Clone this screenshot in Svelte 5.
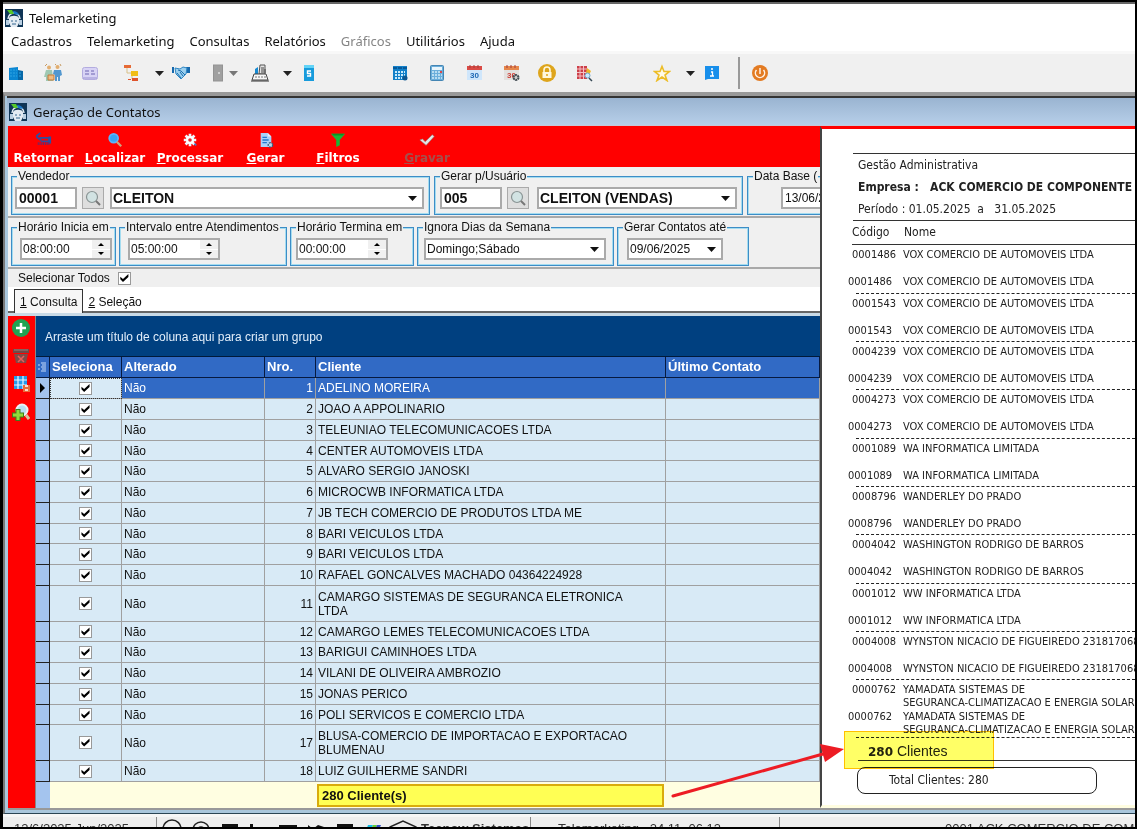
<script lang="ts">
  type Tool = { name: string; icon?: string; gap: number; kind?: "drop" | "sep"; off?: boolean };

  const menus = ["Cadastros", "Telemarketing", "Consultas", "Relatórios", "Gráficos", "Utilitários", "Ajuda"];

  // gap is the empty space to the left of each tool
  const tools: Tool[] = [
    { name: "Empresas", icon: "building", gap: 4 },
    { name: "Clientes", icon: "people", gap: 19 },
    { name: "Cartões", icon: "card", gap: 19 },
    { name: "Estrutura", icon: "tree", gap: 24 },
    { name: "Opções da estrutura", kind: "drop", gap: 14 },
    { name: "Negociações", icon: "hands", gap: 8 },
    { name: "Saída", icon: "door", gap: 19 },
    { name: "Opções de saída", kind: "drop", gap: 2, off: true },
    { name: "Caixa", icon: "cash", gap: 13 },
    { name: "Opções do caixa", kind: "drop", gap: 14 },
    { name: "Serviços", icon: "ess", gap: 8 },
    { name: "Agenda", icon: "agenda", gap: 73 },
    { name: "Calculadora", icon: "calc", gap: 19 },
    { name: "Calendário", icon: "day", gap: 19 },
    { name: "Configurar calendário", icon: "daygear", gap: 19 },
    { name: "Bloquear", icon: "lock", gap: 18 },
    { name: "Pesquisar tabela", icon: "gridfind", gap: 19 },
    { name: "Favoritos", icon: "star", gap: 60 },
    { name: "Opções de favoritos", kind: "drop", gap: 15 },
    { name: "Informações", icon: "info", gap: 8 },
    { name: "", kind: "sep", gap: 17 },
    { name: "Desligar", icon: "power", gap: 11 },
  ];

  const actions = [
    { key: "", label: "Retornar", icon: "back", width: 71 },
    { key: "L", label: "ocalizar", icon: "find", width: 72 },
    { key: "P", label: "rocessar", icon: "gear", width: 78 },
    { key: "G", label: "erar", icon: "doc", width: 73 },
    { key: "F", label: "iltros", icon: "funnel", width: 72 },
    { key: "G", label: "ravar", icon: "check", width: 106, off: true },
  ];

  const side = [
    { name: "Adicionar", icon: "add" },
    { name: "Excluir", icon: "trash" },
    { name: "Salvar grade", icon: "gridsave" },
    { name: "Pesquisar", icon: "addfind" },
  ];

  const clients = [
    "ADELINO MOREIRA",
    "JOAO A APPOLINARIO",
    "TELEUNIAO TELECOMUNICACOES LTDA",
    "CENTER AUTOMOVEIS LTDA",
    "ALVARO SERGIO JANOSKI",
    "MICROCWB INFORMATICA LTDA",
    "JB TECH COMERCIO DE PRODUTOS LTDA ME",
    "BARI VEICULOS LTDA",
    "BARI VEICULOS LTDA",
    "RAFAEL GONCALVES MACHADO 04364224928",
    "CAMARGO SISTEMAS DE SEGURANCA ELETRONICA LTDA",
    "CAMARGO LEMES TELECOMUNICACOES LTDA",
    "BARIGUI CAMINHOES LTDA",
    "VILANI DE OLIVEIRA AMBROZIO",
    "JONAS PERICO",
    "POLI SERVICOS E COMERCIO LTDA",
    "BLUSA-COMERCIO DE IMPORTACAO E EXPORTACAO BLUMENAU",
    "LUIZ GUILHERME SANDRI",
  ];

  let rows = $state(clients.map((name) => ({ name, picked: true })));
  let current = $state(0);

  const report = [
    ["0001486", "VOX COMERCIO DE AUTOMOVEIS LTDA"],
    ["0001543", "VOX COMERCIO DE AUTOMOVEIS LTDA"],
    ["0004239", "VOX COMERCIO DE AUTOMOVEIS LTDA"],
    ["0004273", "VOX COMERCIO DE AUTOMOVEIS LTDA"],
    ["0001089", "WA INFORMATICA LIMITADA"],
    ["0008796", "WANDERLEY DO PRADO"],
    ["0004042", "WASHINGTON RODRIGO DE BARROS"],
    ["0001012", "WW INFORMATICA LTDA"],
    ["0004008", "WYNSTON NICACIO DE FIGUEIREDO 231817068"],
    ["0000762", "YAMADATA SISTEMAS DE\nSEGURANCA-CLIMATIZACAO E ENERGIA SOLAR"],
  ];
</script>

{#snippet icon(name: string)}
  <svg class="icon" viewBox="0 0 18 18" aria-hidden="true">
    {#if name === "logo"}
      <rect width="18" height="18" fill="#0f3556" />
      <path d="M3 10a6 6 0 0 1 12 0" fill="none" stroke="#dfe9f2" stroke-width="1.5" />
      <path d="M4 9c1-3 9-3 10 0v5l-2 4H6l-2-4z" fill="#e3ebf3" />
      <path d="M1 11h3v5H1zM14 11h3v5h-3z" fill="#b9cfe2" />
      <path d="M6 12h2M10 12h2M7 15h4" stroke="#35668f" />
      <path d="M2 1h5l2 4H5z" fill="#55c929" />
      <path d="M8 2c3 0 5 1 6 4L9 5z" fill="#1676c8" />
    {:else if name === "building"}
      <path d="M2 4l9-1v13H2z" fill="#0a86d2" />
      <path d="M11 6l5 1v9h-5z" fill="#0768a8" />
      <path d="M3 6h7M3 9h7M3 12h7M12 9h3M12 12h3" stroke="#2fa5e4" stroke-dasharray="2 1" />
    {:else if name === "people"}
      <circle cx="5" cy="3.500" r="2" fill="#e2ae70" />
      <circle cx="13.500" cy="3" r="2" fill="#e2ae70" />
      <path d="M2 6h6l1 7v4H2v-4H0z" fill="#9fc8b2" />
      <path d="M10 6h7l1 5-2 1v5h-2v-4h-1v4h-2v-6l-2-1z" fill="#5297cf" />
      <path d="M4 11h6v5H4z" fill="#f0bb80" stroke="#c27a3c" />
      <path d="M1 2l2-2M11 1l1-1M17 2l-1-2" stroke="#c69a62" />
    {:else if name === "card"}
      <rect x="1.500" y="3.500" width="15" height="12" rx="2" fill="#d8d3f5" stroke="#b3acdf" />
      <path d="M4 7h4M4 10h4M10 7h3M10 10h4" stroke="#6d64b1" stroke-width="1.200" />
      <path d="M2 14h14" stroke="#9a92d2" />
    {:else if name === "tree"}
      <path d="M4 4v5h4M9 12v3" fill="none" stroke="#d8c087" />
      <rect x="1" y="1" width="7" height="3" fill="#e66a35" />
      <rect x="8" y="7" width="7" height="5" fill="#f1bd16" />
      <rect x="9" y="14" width="6" height="3" fill="#df542c" />
      <rect x="5" y="15" width="3" height="1" fill="#df542c" />
    {:else if name === "hands"}
      <path d="M0 3h2v6H0zM18 3h-4l-1 6h5z" fill="#1769ad" />
      <path d="M3 4l5 1 3-2 4 1-1 6-5 5-5-5z" fill="#9cd0ef" stroke="#2f87c4" />
      <path d="M6 6l3 1 4 4M5 9l4 5M8 8l3 4" fill="none" stroke="#1b6dac" />
    {:else if name === "door"}
      <rect x="4.500" y="1" width="9" height="16" fill="#a0a0a0" stroke="#939393" />
      <path d="M10 8v2" stroke="#fff" />
    {:else if name === "cash"}
      <path d="M9 1h5v9H8z" fill="#e4e4e4" stroke="#555" />
      <path d="M10 4h3M10 6h5M10 8h5" stroke="#444" />
      <path d="M4 5l3-2v7H4z" fill="#168ad2" />
      <path d="M3 10h12l2 6H1z" fill="#f7f7f7" stroke="#444" />
      <path d="M0 17h18" stroke="#333" />
      <path d="M4 13h11" stroke="#777" stroke-dasharray="2 1" />
    {:else if name === "ess"}
      <rect x="4" y="1" width="10" height="16" fill="#179bdc" />
      <path d="M4 1h10v3H4z" fill="#62d3f7" />
      <path d="M11 7H7.500v2.500h3V12H7" fill="none" stroke="#fff" stroke-width="1.400" />
    {:else if name === "agenda"}
      <rect x="2" y="2" width="14" height="14" fill="#1280c9" />
      <path d="M2 4h14" stroke="#075a9b" stroke-width="2" stroke-dasharray="4 1" />
      <path d="M4 8h10M4 11h10M4 14h7" stroke="#c7eafb" stroke-width="2" stroke-dasharray="2 1" />
      <circle cx="14" cy="14" r="2.500" fill="#0e5790" />
    {:else if name === "calc"}
      <rect x="2.500" y="1.500" width="13" height="15" rx="1" fill="#6baedb" stroke="#4485b3" />
      <rect x="4" y="3" width="10" height="3" fill="#e8f5fc" />
      <path d="M4 8h10M4 11h10M4 14h10" stroke="#b7dcf1" stroke-width="2" stroke-dasharray="2 1" />
      <path d="M12 8h2" stroke="#da4b4b" stroke-width="2" />
    {:else if name === "day" || name === "daygear"}
      <rect x="2" y="3" width="15" height="13" fill={name === "day" ? "#cfe6fb" : "#e3e1df"} />
      <rect x="2" y="2" width="15" height="4" fill={name === "day" ? "#d94a45" : "#e6874c"} />
      <path d="M5 1v3M9 1v3M13 1v3" stroke="#a33c38" />
      <text x="9.500" y="14" text-anchor="middle" class="daynum" fill={name === "day" ? "#1d67b3" : "#cf3f38"}>30</text>
      {#if name === "daygear"}
        <circle cx="14" cy="13.500" r="2.500" fill="#ccc" stroke="#414b52" stroke-width="2" stroke-dasharray="2 .6" />
      {/if}
    {:else if name === "lock"}
      <circle cx="9" cy="9" r="9" fill="#dea51c" />
      <path d="M6 8V6a3 3 0 0 1 6 0v2" fill="none" stroke="#fff8dd" stroke-width="1.600" />
      <rect x="4.500" y="8" width="9" height="6" fill="#fff8dd" />
      <path d="M9 10v2" stroke="#dea51c" stroke-width="1.500" />
    {:else if name === "gridfind"}
      <rect x="2" y="2" width="10" height="13" fill="#cc3f48" />
      <path d="M2 5h10M2 8.500h10M2 12h10M5 2v13M8.500 2v13" stroke="#f4c1c5" />
      <path d="M12 4l4 3-2 4-3-2z" fill="#edb528" />
      <circle cx="12.500" cy="11.500" r="2.500" fill="#cdeafc" stroke="#6da5cc" />
      <path d="M14 14l3 3" stroke="#364855" stroke-width="1.500" />
    {:else if name === "star"}
      <path d="M9 2.500l2 5h5.500l-4.500 3.500 2 5.500-5-3.500-5 3.500 2-5.500L1.500 7.500H7z" fill="#fffbe9" stroke="#edbd27" stroke-width="1.600" />
    {:else if name === "info"}
      <path d="M2 2h14v13H5l-3 1z" fill="#188feb" />
      <path d="M8 8h1.500v4M7 12h4M8 5h2" fill="none" stroke="#fff" stroke-width="1.300" />
    {:else if name === "power"}
      <circle cx="9" cy="9" r="8" fill="#e37b22" />
      <path d="M5.500 6a4.600 4.600 0 1 0 7 0M9 4v6" fill="none" stroke="#fff1e4" stroke-width="1.500" />
    {:else if name === "back"}
      <path d="M5 1L0 5l5 4V6.500h9.500v4H6" fill="none" stroke="#304e9e" stroke-width="2" />
      <path d="M14 5h3v8h-3z" fill="#304e9e" />
      <path d="M2 13h13" stroke="#54307a" stroke-width="3" stroke-dasharray="1 1" />
    {:else if name === "find"}
      <circle cx="7.500" cy="7" r="5" fill="#38a4f4" stroke="#5bb4fa" stroke-width="2" />
      <path d="M11 11l5 5" stroke="#cfa17e" stroke-width="2.500" />
    {:else if name === "gear"}
      <path d="M9 2v14M2 9h14M4 4l10 10M14 4L4 14" stroke="#edf5ff" stroke-width="3" />
      <circle cx="9" cy="9" r="4.500" fill="#fff" />
      <circle cx="9" cy="9" r="2" fill="#e3282f" />
      <path d="M14 13l2 2" stroke="#4b78bd" stroke-width="2" />
    {:else if name === "doc"}
      <path d="M3 1h8l4 4v12H3z" fill="#a9d1fa" />
      <path d="M11 1v4h4" fill="#e2f0fe" />
      <path d="M5 6h5M5 9h7M5 12h5" stroke="#2279cf" stroke-width="1.500" />
      <circle cx="14" cy="14.500" r="2.500" fill="#bdd4e5" stroke="#345d80" stroke-width="1.500" stroke-dasharray="2 1" />
    {:else if name === "funnel"}
      <path d="M1 2h16l-6 7v6l-4 2V9z" fill="#18b735" />
      <path d="M2 2h14l-2 2H4z" fill="#079426" />
    {:else if name === "check"}
      <path d="M1 9l3-1 3 3 8-8 2 2-9 10z" fill="#e5e5e5" stroke="#8a8a8a" stroke-width=".7" />
    {:else if name === "add"}
      <circle cx="9" cy="9" r="9" fill="#20a352" />
      <path d="M9 4v10M4 9h10" stroke="#fff" stroke-width="2.500" />
    {:else if name === "trash"}
      <path d="M1 2h16v4H1z" fill="#6d4a48" />
      <path d="M2 7h14l-2 9H4z" fill="#7d4b48" />
      <path d="M6 9l6 6M12 9l-6 6" stroke="#e8605a" stroke-width="1.500" />
      <path d="M2 3h14" stroke="#a07a76" />
    {:else if name === "gridsave"}
      <rect x="2" y="1" width="13" height="13" fill="#269bea" />
      <path d="M6 1v13M11 1v13M2 5h13M2 10h13" stroke="#e8f5ff" stroke-width="1.200" />
      <rect x="11" y="10" width="7" height="7" fill="#e96c3a" />
      <path d="M13 11h3M13 15h3" stroke="#fff" stroke-width="1.500" />
    {:else if name === "addfind"}
      <circle cx="10" cy="7" r="5.500" fill="#b8dff2" stroke="#eaf2f4" stroke-width="2" />
      <path d="M14 12l3 4" stroke="#d9c4a2" stroke-width="3" />
      <path d="M6 6v12M0 12h12" stroke="#3e7c1d" stroke-width="5" />
      <path d="M6 7v10M1 12h10" stroke="#91d93b" stroke-width="3" />
    {:else if name === "lens"}
      <circle cx="8" cy="8" r="5.500" fill="#d2e3e3" stroke="#8a9494" stroke-width="1.200" />
      <path d="M12 12l4 4" stroke="#777" stroke-width="2" />
    {/if}
  </svg>
{/snippet}

{#snippet arrow()}
  <svg class="arrow" viewBox="0 0 9 5" aria-hidden="true"><path d="M0 0h9L4.500 5z" fill="currentColor" /></svg>
{/snippet}

{#snippet combo(label: string, value: string)}
  <span class="combo">
    <select aria-label={label}><option>{value}</option></select>
    {@render arrow()}
  </span>
{/snippet}

{#snippet time(label: string, value: string)}
  <span class="time">
    <input type="text" {value} aria-label={label} />
    <span class="spin">
      <button aria-label="Aumentar"><svg viewBox="0 0 6 3"><path d="M0 3h6L3 0z" /></svg></button>
      <button aria-label="Diminuir"><svg viewBox="0 0 6 3"><path d="M0 0h6L3 3z" /></svg></button>
    </span>
  </span>
{/snippet}

<div class="app">
  <header class="title">{@render icon("logo")}<span>Telemarketing</span></header>
  <nav class="menu">
    {#each menus as m}
      <button disabled={m === "Gráficos"}>{m}</button>
    {/each}
  </nav>

  <div class="toolbar">
    {#each tools as t}
      {#if t.kind === "sep"}
        <span class="sep" style="margin-left: {t.gap}px"></span>
      {:else}
        <button class={t.kind ?? "tool"} class:off={t.off} style="margin-left: {t.gap}px" aria-label={t.name}>
          {#if t.icon}{@render icon(t.icon)}{:else}{@render arrow()}{/if}
        </button>
      {/if}
    {/each}
  </div>

  <main class="window">
    <header class="caption">{@render icon("logo")}<span>Geração de Contatos</span></header>

    <div class="body">
      <section class="left">
        <div class="actions">
          {#each actions as a}
            <button disabled={a.off} style="width: {a.width}px">
              {@render icon(a.icon)}
              <span><u>{a.key}</u>{a.label}</span>
            </button>
          {/each}
        </div>

        <div class="filters">
          <fieldset class="seller strong">
            <legend>Vendedor</legend>
            <input type="text" value="00001" aria-label="Código do vendedor" />
            <button class="lens" aria-label="Buscar vendedor">{@render icon("lens")}</button>
            {@render combo("Vendedor", "CLEITON")}
          </fieldset>
          <fieldset class="user strong">
            <legend>Gerar p/Usuário</legend>
            <input type="text" value="005" aria-label="Código do usuário" />
            <button class="lens" aria-label="Buscar usuário">{@render icon("lens")}</button>
            {@render combo("Usuário", "CLEITON (VENDAS)")}
          </fieldset>
          <fieldset class="base">
            <legend>Data Base (</legend>
            <input type="text" value="13/06/2025" aria-label="Data base" />
          </fieldset>
        </div>

        <div class="filters second">
          <fieldset class="start">
            <legend>Horário Inicia em</legend>
            {@render time("Horário inicial", "08:00:00")}
          </fieldset>
          <fieldset class="interval">
            <legend>Intervalo entre Atendimentos</legend>
            {@render time("Intervalo", "05:00:00")}
          </fieldset>
          <fieldset class="end">
            <legend>Horário Termina em</legend>
            {@render time("Horário final", "00:00:00")}
          </fieldset>
          <fieldset class="days">
            <legend>Ignora Dias da Semana</legend>
            {@render combo("Dias ignorados", "Domingo;Sábado")}
          </fieldset>
          <fieldset class="until">
            <legend>Gerar Contatos até</legend>
            {@render combo("Data limite", "09/06/2025")}
          </fieldset>
        </div>

        <label class="all">Selecionar Todos <input type="checkbox" checked /></label>

        <div class="tabs">
          <button class="active"><u>1</u> Consulta</button>
          <button><u>2</u> Seleção</button>
        </div>

        <div class="work">
          <div class="side">
            {#each side as s}
              <button aria-label={s.name}>{@render icon(s.icon)}</button>
            {/each}
          </div>
          <div class="grid">
            <div class="groupby">Arraste um título de coluna aqui para criar um grupo</div>
            <table>
              <colgroup>
                <col class="c-mark" /><col class="c-sel" /><col class="c-alt" /><col class="c-nro" /><col class="c-cli" /><col />
              </colgroup>
              <thead>
                <tr>
                  <th class="corner" aria-label="Linha">
                    <svg class="lines" viewBox="0 0 9 10"><path d="M3 1h5M0 3h2M4 3h4M3 5h5M0 7h2M4 7h4M3 9h5" stroke="#c6dafa" /></svg>
                  </th>
                  <th>Seleciona</th><th>Alterado</th><th>Nro.</th><th>Cliente</th><th>Último Contato</th>
                </tr>
              </thead>
              <tbody>
                {#each rows as row, i}
                  <tr class:current={i === current} class:tall={row.name.length > 40} onclick={() => (current = i)}>
                    <td class="mark">
                      {#if i === current}<svg viewBox="0 0 5 10"><path d="M0 0l5 5-5 5z" /></svg>{/if}
                    </td>
                    <td class="pick"><input type="checkbox" bind:checked={row.picked} aria-label={row.name} /></td>
                    <td>Não</td>
                    <td class="num">{i + 1}</td>
                    <td class="client">{row.name}</td>
                    <td></td>
                  </tr>
                {/each}
              </tbody>
              <tfoot>
                <tr><td class="mark"></td><td colspan="3"></td><td class="sum"><div>280 Cliente(s)</div></td><td></td></tr>
              </tfoot>
            </table>
          </div>
        </div>
      </section>

      <aside class="report">
        <div class="heading">
          <p>Gestão Administrativa</p>
          <p class="company">Empresa&nbsp;:&nbsp;&nbsp; ACK COMERCIO DE COMPONENTE</p>
          <p>Período : 01.05.2025 &nbsp;a &nbsp; 31.05.2025</p>
        </div>
        <div class="cols"><span>Código</span><span>Nome</span></div>
        {#each report as [code, name]}
          <div class="entry">
            <div><span>{code}</span><span>{name}</span></div>
            <div class="again"><span>{code}</span><span>{name}</span></div>
          </div>
        {/each}
        <p class="count"><b>280</b> Clientes</p>
        <p class="total">Total Clientes: 280</p>
        <div class="marker"></div>
      </aside>

      <svg class="pointer" viewBox="0 0 174 56" aria-hidden="true">
        <path d="M3 52L153 10" stroke="#ed1c24" stroke-width="3" stroke-linecap="round" />
        <path d="M174 5l-24-5 5 18z" fill="#ed1c24" />
      </svg>
    </div>
  </main>

  <footer class="status">
    <span class="date">13/6/2025 Jun/2025</span>
    <span class="social">
      <svg viewBox="0 0 260 20" aria-hidden="true">
        <g fill="none" stroke="#222" stroke-width="1.500">
          <circle cx="15" cy="10" r="9" /><circle cx="44" cy="11" r="8" /><circle cx="44" cy="11" r="3" />
          <path d="M233 8l13-6 13 6v12h-26z" />
        </g>
        <path d="M65 5h16v15H65zM93 5h3v3h-3zM93 10h3v9h-3zM98 8h4v10h-4zM122 6h18v13h-18zM151 6l5 4 5-4 6 2-4 10h-12zM180 5h16v15h-16z" fill="#111" />
        <path d="M211 6h5l-6 13h-4z" fill="#16bfe5" /><path d="M216 6h4l-6 13h-4z" fill="#66cf3c" /><path d="M220 6h4l-6 13h-4z" fill="#334fc8" />
      </svg>
    </span>
    <span class="sys">Tecnow Sistemas</span>
    <span class="ver">Telemarketing &nbsp; 24.11. 06.13</span>
    <span class="firm">0001 ACK COMERCIO DE COMPONENTES</span>
  </footer>
</div>

<style>
  :global(body) {
    margin: 0;
    background: #000;
  }
  .app {
    box-sizing: border-box;
    display: flex;
    flex-direction: column;
    height: 100vh;
    overflow: hidden;
    border: solid #000;
    border-width: 2px 2px 2px 3px;
    background: #f0f0f0;
    color: #111;
    font: 12px/14px "Liberation Sans", Arial, sans-serif;
  }
  .app *,
  .app *::before {
    box-sizing: border-box;
  }
  button,
  input,
  select {
    margin: 0;
    padding: 0;
    border: 0;
    border-radius: 0;
    background: none;
    color: inherit;
    font: inherit;
  }
  p {
    margin: 0;
  }
  .icon {
    display: block;
    flex: none;
    width: 18px;
    height: 18px;
  }
  .daynum {
    font: bold 8px "Liberation Sans", Arial, sans-serif;
  }
  .arrow {
    display: block;
    width: 9px;
    height: 5px;
  }

  .title,
  .caption {
    display: flex;
    flex: none;
    align-items: center;
    gap: 6px;
    height: 29px;
    padding: 0 2px;
    border-top: 2px solid #666;
    background: #fff;
    font: 13px/18px "Noto Sans", "Segoe UI", sans-serif;
  }
  .menu {
    display: flex;
    flex: none;
    gap: 15px;
    height: 23px;
    padding: 0 8px;
    border-bottom: 3px solid #f8f8f8;
    background: #fff;
    font: 13px/20px "Noto Sans", "Segoe UI", sans-serif;
  }
  .menu button:disabled {
    color: #858585;
  }
  .toolbar {
    display: flex;
    flex: none;
    align-items: center;
    height: 38px;
  }
  .drop {
    color: #222;
  }
  .drop.off {
    color: #777;
  }
  .sep {
    width: 2px;
    height: 32px;
    background: #999;
  }

  .window {
    display: flex;
    flex: 1 0 auto;
    flex-direction: column;
    padding: 0 0 3px 2px;
    border-top: 4px solid #999;
    border-left: 2px solid #777;
    border-bottom: 1px solid #2b4554;
    background: #a9c6dc;
  }
  .caption {
    height: 30px;
    border-top: 2px solid #333;
    border-bottom: 1px solid #c8c8d8;
    background: linear-gradient(#9ab4d1, #b7cfe9);
  }
  .body {
    position: relative;
    display: grid;
    flex: 1 0 auto;
    grid-template-columns: minmax(0, 812fr) minmax(0, 315fr);
    border-bottom: 2px solid #999;
    margin-left: 1px;
  }
  .left {
    display: flex;
    flex-direction: column;
    min-width: 0;
    overflow: hidden;
  }

  .actions {
    display: flex;
    height: 41px;
    background: #f00;
  }
  .actions button {
    display: flex;
    flex: none;
    flex-direction: column;
    align-items: center;
    gap: 3px;
    padding-top: 6px;
    color: #fff;
    font: bold 12px/14px "DejaVu Sans", Verdana, sans-serif;
  }
  .actions .icon {
    width: 16px;
    height: 16px;
  }
  .actions button:disabled {
    color: #a5504c;
  }

  .filters {
    display: flex;
    gap: 4px;
    height: 51px;
    padding: 2px 3px 0;
    border-bottom: 2px solid #a9a9a9;
    background: #f0f0f0;
  }
  .filters.second {
    gap: 3px;
  }
  fieldset {
    --pad: 3px;
    display: flex;
    flex: none;
    align-items: flex-start;
    gap: 5px;
    min-width: 0;
    height: 46px;
    margin: 0;
    padding: 4px 3px 0 var(--pad);
    border: 1px solid #3d8dc6;
    box-shadow: inset 0 0 0 1px #a4dcf0;
    white-space: nowrap;
  }
  legend {
    margin-left: calc(5px - var(--pad));
    padding: 0 1px;
    background: #f0f0f0;
    line-height: 14px;
  }
  .seller {
    width: 419px;
  }
  .user {
    --pad: 5px;
    width: 309px;
  }
  .base {
    --pad: 33px;
    width: 200px;
  }
  .start {
    --pad: 8px;
    width: 105px;
  }
  .interval {
    --pad: 8px;
    width: 168px;
  }
  .end {
    --pad: 5px;
    width: 124px;
  }
  .days {
    --pad: 6px;
    width: 197px;
    padding-right: 7px;
  }
  .until {
    --pad: 9px;
    width: 132px;
    padding-right: 25px;
  }
  .filters input,
  .combo {
    height: 22px;
    border: 2px solid #aaa;
    background: #fff;
  }
  .filters input {
    width: 62px;
    padding-left: 2px;
  }
  .base input {
    width: 92px;
  }
  .strong input,
  .strong select {
    font-weight: bold;
    font-size: 14px;
  }
  .lens {
    display: grid;
    width: 22px;
    height: 22px;
    place-items: center;
    border: 1px solid #aaa;
    background: #dedede;
  }
  .combo {
    display: grid;
    flex: 1;
    align-items: center;
  }
  .combo > :global(*) {
    grid-area: 1 / 1;
  }
  select {
    width: 100%;
    height: 18px;
    padding-left: 1px;
    appearance: none;
  }
  .combo .arrow {
    justify-self: end;
    margin-right: 5px;
    pointer-events: none;
  }
  .strong .combo {
    margin: 0 2px 0 1px;
  }
  .user .combo {
    margin-left: 3px;
  }
  .time {
    display: flex;
    width: 92px;
    height: 22px;
    border: 2px solid #aaa;
    background: #fff;
  }
  .time input {
    flex: 1;
    width: 0;
    height: 18px;
    padding-left: 1px;
    border: 0;
  }
  .spin {
    display: grid;
    width: 18px;
    gap: 1px;
  }
  .spin button {
    display: grid;
    place-items: center;
    background: #f0f0f0;
  }
  .spin svg {
    width: 6px;
    height: 3px;
  }

  .all {
    display: flex;
    align-items: center;
    gap: 8px;
    height: 18px;
    padding-left: 10px;
    background: #efefef;
  }
  input[type="checkbox"] {
    display: grid;
    width: 13px;
    height: 13px;
    place-items: center;
    border: 1px solid #999;
    background: #fff;
    appearance: none;
  }
  input[type="checkbox"]:checked::before {
    width: 9px;
    height: 9px;
    background: #000;
    clip-path: polygon(5% 35%, 35% 60%, 95% 5%, 95% 38%, 35% 95%, 5% 65%);
    content: "";
  }
  .tabs {
    display: flex;
    align-items: stretch;
    height: 26px;
    padding: 2px 6px 0;
    border-bottom: 2px solid #666;
    background: #fff;
  }
  .tabs button {
    margin-bottom: -2px;
    padding: 1px 5px 0;
  }
  .tabs .active {
    padding-top: 0;
    border: solid #333;
    border-width: 1px 1px 0;
    background: #f6f6f6;
  }
  .work {
    display: flex;
    flex: 1 0 auto;
    border-top: 3px solid #c9dae6;
  }
  .side {
    display: flex;
    flex: none;
    flex-direction: column;
    align-items: center;
    gap: 10px;
    width: 28px;
    padding: 3px 2px 0 0;
    border-right: 1px solid #888;
    background: #f00;
  }
  .grid {
    display: flex;
    flex: 1;
    flex-direction: column;
    min-width: 0;
    background: #fffee1;
  }
  .groupby {
    flex: none;
    height: 41px;
    padding-left: 9px;
    border-bottom: 1px solid #001a3a;
    background: #004080;
    color: #e2eefa;
    line-height: 42px;
  }
  table {
    width: 100%;
    border-spacing: 0;
    table-layout: fixed;
  }
  .c-mark {
    width: 14px;
  }
  .c-sel {
    width: 72px;
  }
  .c-alt {
    width: 143px;
  }
  .c-nro {
    width: 51px;
  }
  .c-cli {
    width: 350px;
  }
  th,
  td {
    padding: 0 2px;
    border: solid #a0a0a0;
    border-width: 0 1px 1px 0;
    text-align: left;
    vertical-align: middle;
  }
  th {
    height: 21px;
    border-color: #071a40;
    background: #316ac5;
    color: #fff;
    font-size: 13px;
  }
  .lines {
    display: block;
    width: 9px;
    height: 10px;
  }
  tbody tr {
    height: 21px;
    background: #d8eaf6;
  }
  tbody tr:nth-child(4n) {
    height: 20px;
  }
  tbody tr.tall {
    height: 36px;
  }
  tbody tr.current {
    background: #316ac5;
    color: #fff;
  }
  .mark {
    padding: 0 4px;
    border-color: #222;
    background: #a4c4ee;
  }
  .mark svg {
    display: block;
    width: 5px;
    height: 10px;
  }
  .pick input {
    margin: 0 auto;
  }
  .current .pick {
    outline: 1px dotted #333;
    outline-offset: -1px;
    background: #d8eaf6;
  }
  td.num {
    text-align: right;
  }
  td.client {
    padding-right: 16px;
  }
  tfoot td {
    height: 26px;
    border: 0;
  }
  tfoot .sum {
    padding: 2px 2px 1px 1px;
  }
  .sum div {
    height: 23px;
    padding-left: 3px;
    border: 2px solid #d9ac0c;
    background: #ffff54;
    font: bold 13px/20px "Liberation Sans", Arial, sans-serif;
  }

  .report {
    position: relative;
    min-width: 0;
    overflow: hidden;
    border-top: 3px solid #f00;
    border-bottom: 3px solid #fffde0;
    border-left: 2px solid #444;
    background: #fff;
    color: #222;
    font: 11px/13px "DejaVu Sans Condensed", Tahoma, sans-serif;
    white-space: nowrap;
  }
  .heading {
    display: grid;
    grid-auto-rows: 22px;
    height: 68px;
    margin: 24px 0 0 31px;
    padding-left: 5px;
    border-top: 1px solid #333;
    border-bottom: 1px solid #333;
    font-size: 12px;
    line-height: 22px;
  }
  .company {
    font-weight: bold;
  }
  .cols {
    display: flex;
    height: 24px;
    margin-left: 30px;
    border-bottom: 1px solid #333;
    font-size: 12px;
    line-height: 22px;
  }
  .cols span {
    width: 52px;
  }
  .entry {
    margin-left: 34px;
    padding-top: 3px;
    border-bottom: 1px dashed #222;
  }
  .entry:nth-of-type(3n) {
    padding-bottom: 1px;
  }
  .entry div {
    display: flex;
    min-height: 27px;
    margin-left: -4px;
  }
  .entry .again {
    min-height: 17px;
    margin-left: -8px;
  }
  .entry span:first-child {
    flex: none;
    width: 51px;
  }
  .entry .again span:first-child {
    width: 55px;
  }
  .entry span {
    white-space: pre;
  }
  .count {
    height: 23px;
    margin-left: 36px;
    padding-left: 10px;
    border-bottom: 1px solid #333;
    font: 14px/26px "Liberation Sans", Arial, sans-serif;
  }
  .count b {
    font: bold 12px "DejaVu Sans", Verdana, sans-serif;
  }
  .total {
    width: 240px;
    height: 27px;
    margin: 6px 0 11px 35px;
    padding-left: 31px;
    border: 1px solid #222;
    border-radius: 8px;
    font-size: 12px;
    line-height: 25px;
  }
  /* highlighter over the client count */
  .marker {
    position: absolute;
    bottom: 36px;
    left: 22px;
    width: 150px;
    height: 38px;
    border: 1px solid #ffc000;
    background: #ffff0099;
    mix-blend-mode: multiply;
  }
  .pointer {
    position: absolute;
    right: 291px;
    bottom: 8px;
    width: 174px;
    height: 56px;
  }

  .status {
    display: flex;
    flex: none;
    height: 24px;
    border-top: 3px solid #f6f6f6;
    background: #eee;
    color: #333;
    font-size: 13px;
    line-height: 24px;
    white-space: nowrap;
  }
  .status span {
    border-right: 1px solid #888;
  }
  .status .date {
    width: 154px;
    padding-left: 11px;
  }
  .status .social {
    width: 260px;
    border: 0;
  }
  .social svg {
    display: block;
    width: 260px;
    height: 20px;
    margin-top: 2px;
  }
  .status .sys {
    width: 114px;
    padding-left: 4px;
    font-weight: bold;
  }
  .status .ver {
    width: 249px;
    padding-left: 27px;
  }
  .status .firm {
    flex: 1;
    min-width: 0;
    padding-left: 165px;
    border: 0;
  }
</style>
